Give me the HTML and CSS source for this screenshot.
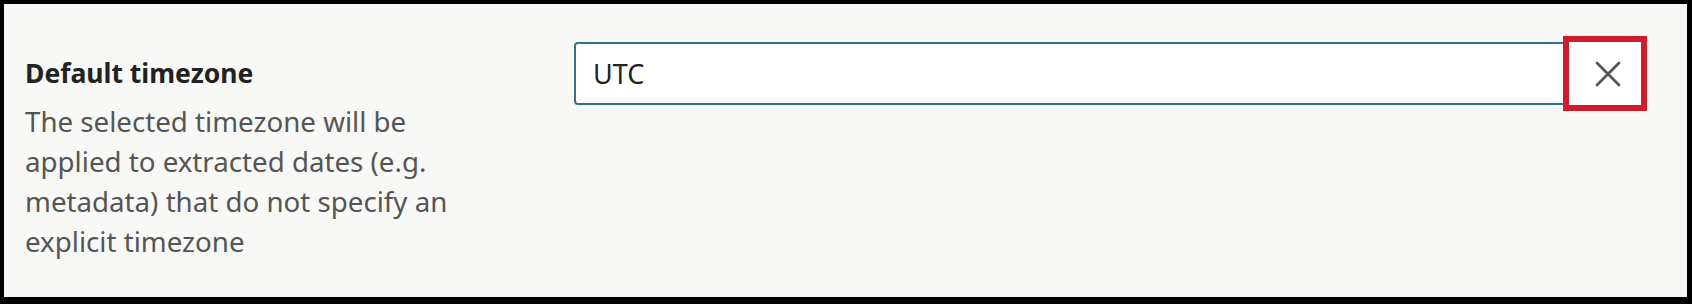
FILE: index.html
```html
<!DOCTYPE html>
<html lang="en">
<head>
<meta charset="utf-8">
<title>Default timezone</title>
<link rel="stylesheet" href="styles.css">
</head>
<body>
<div class="frame">
  <div class="setting">
    <div class="label-col">
      <div class="setting-title">Default timezone</div>
      <div class="setting-desc">The selected timezone will be applied to extracted dates (e.g. metadata) that do not specify an explicit timezone</div>
    </div>
    <div class="control-col">
      <div class="field">
        <span class="field-value">UTC</span>
        <button class="clear-btn" type="button" aria-label="Clear">
          <svg width="26" height="26" viewBox="0 0 26 26" aria-hidden="true">
            <path d="M2 2 L24 24 M24 2 L2 24" stroke="#555" stroke-width="2.8" stroke-linecap="round" fill="none"/>
          </svg>
        </button>
      </div>
    </div>
  </div>
</div>
</body>
</html>
```
FILE: styles.css
```css
html, body {
  margin: 0;
  padding: 0;
  background: #000;
}
.frame {
  box-sizing: border-box;
  width: 1692px;
  height: 304px;
  border-style: solid;
  border-color: #000;
  border-width: 4px 5px 7px 4px;
  background: #f8f8f6;
  font-family: "Noto Sans", "Open Sans", sans-serif;
}
.setting {
  display: flex;
  padding: 38px 46px 0 21px;
}
.label-col {
  width: 460px;
  flex: none;
  padding-top: 11px;
}
.setting-title {
  font-size: 26.5px;
  line-height: 40px;
  font-weight: 700;
  color: #222;
  margin-bottom: 8px;
}
.setting-desc {
  font-size: 27.7px;
  line-height: 40px;
  color: #555;
}
.control-col {
  flex: 1;
  padding-left: 89px;
}
.field {
  box-sizing: border-box;
  display: flex;
  align-items: center;
  height: 63px;
  border: 2px solid #2e7588;
  border-radius: 4px;
  background: #fff;
}
.field-value {
  flex: 1;
  padding-left: 17px;
  font-size: 27px;
  color: #222;
}
.clear-btn {
  align-self: stretch;
  margin: -2px -2px -2px 0;
  width: 72px;
  padding: 0 0 0 6px;
  border: 0;
  background: #fff;
  outline: 6px solid #d01c2a;
  display: flex;
  align-items: center;
  justify-content: center;
  cursor: pointer;
}
.clear-btn svg {
  display: block;
}
```
